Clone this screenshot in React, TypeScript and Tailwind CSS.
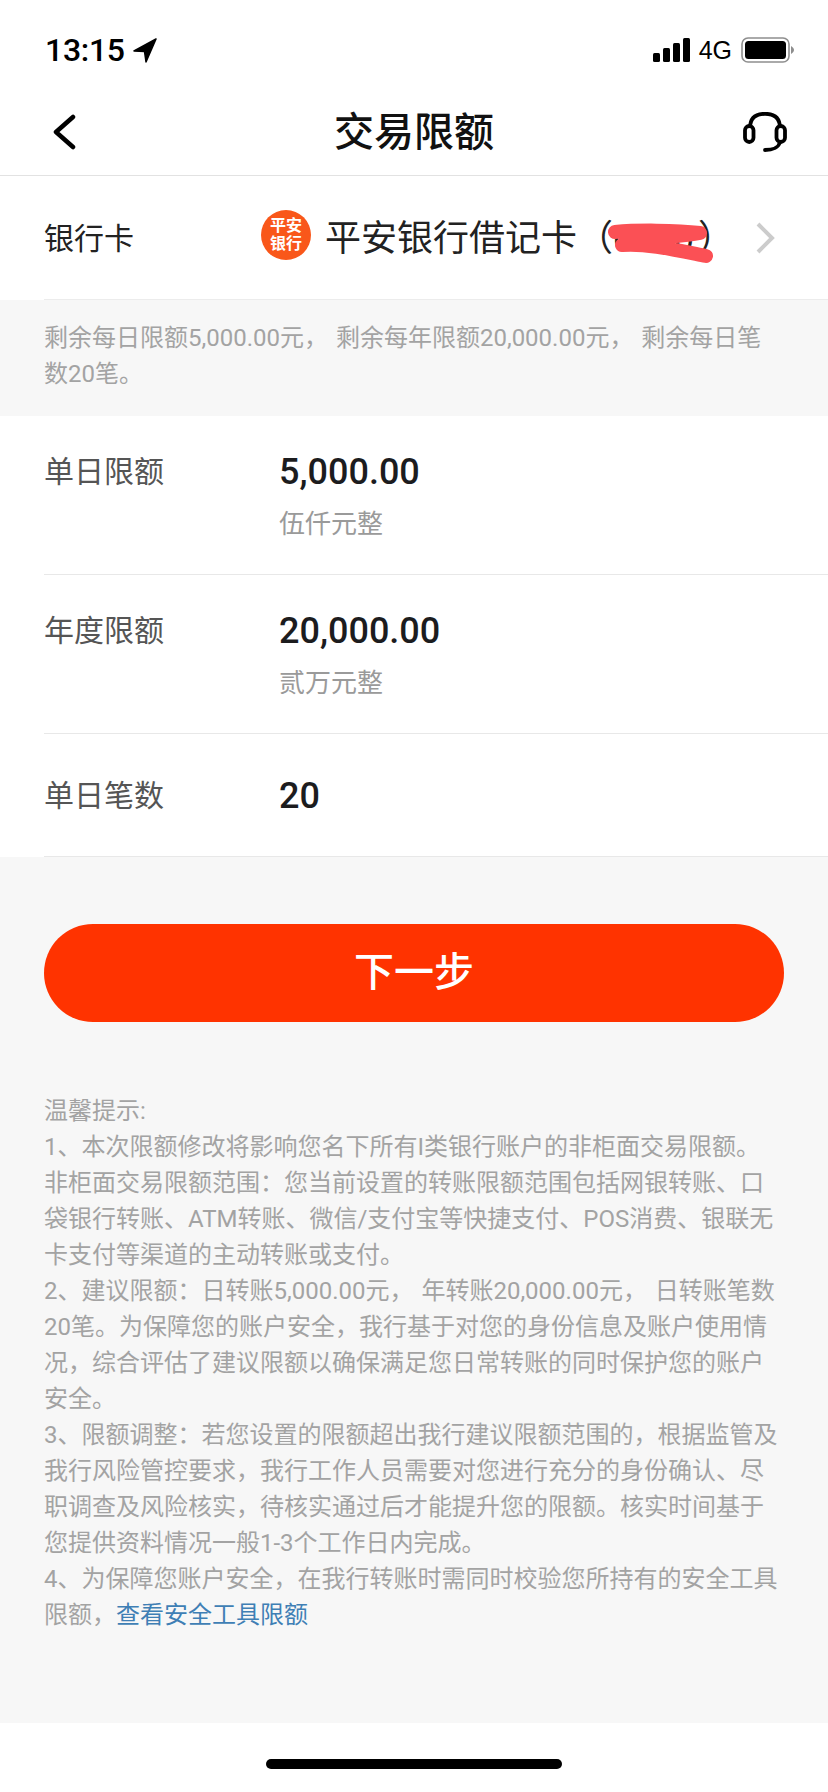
import React from 'react';

const cjk = "font-['Roboto','Noto_Sans_CJK_SC',sans-serif]";

const LimitRow: React.FC<{ label: string; value: string; note?: string }> = ({ label, value, note }) => (
  <div className="pl-[44px]">
    <div className={`flex border-b border-[#e8e8e8] ${note ? 'h-[159px] pt-[31px]' : 'h-[123px] items-center pt-[2px]'}`}>
      <div className="w-[235px] text-[30px] leading-[50px] text-[#555555]">{label}</div>
      <div>
        <div className="text-[36px] leading-[50px] font-medium text-[#1c1c1e]">{value}</div>
        {note && <div className="mt-[9px] text-[26px] leading-[36px] text-[#9a9a9a]">{note}</div>}
      </div>
    </div>
  </div>
);

export default function App() {
  return (
    <div className={`${cjk} w-[828px] h-[1792px] bg-white flex flex-col overflow-hidden`}>
      {/* status bar */}
      <div className="h-[88px] flex items-start justify-between pl-[45px] pr-[34px] pt-[30px]">
        <div className="flex items-center gap-[9px]">
          <span className="text-[32px] leading-[40px] font-medium tracking-[-0.3px] text-black font-['Roboto',sans-serif]">13:15</span>
          <svg width="24" height="25" viewBox="0 0 24 25" className="-ml-[1px]">
            <path d="M23 1 L1 13 L11.5 13.5 L13 24 Z" fill="#000" stroke="#000" strokeWidth="1.5" strokeLinejoin="round" />
          </svg>
        </div>
        <div className="flex items-center gap-[9px] h-[40px]">
          <svg width="37" height="24" viewBox="0 0 37 24">
            <rect x="0" y="15" width="7" height="9" rx="1.5" fill="#000" />
            <rect x="10" y="10" width="7" height="14" rx="1.5" fill="#000" />
            <rect x="20" y="5" width="7" height="19" rx="1.5" fill="#000" />
            <rect x="30" y="0" width="7" height="24" rx="1.5" fill="#000" />
          </svg>
          <span className="text-[25px] leading-[40px] text-black font-['Liberation_Sans',sans-serif]">4G</span>
          <svg width="53" height="26" viewBox="0 0 53 26">
            <rect x="1" y="1" width="47" height="24" rx="6" fill="none" stroke="#8e8e8e" strokeWidth="1.6" />
            <rect x="4" y="4" width="41" height="18" rx="3.5" fill="#000" />
            <path d="M50 9 C52 10 53 12 53 13 C53 14 52 16 50 17 Z" fill="#8e8e8e" />
          </svg>
        </div>
      </div>

      {/* nav */}
      <div className="h-[88px] relative flex items-center justify-between pl-[52px] pr-[41px] border-b border-[#e2e2e2]">
        <svg width="24" height="36" viewBox="0 0 24 36">
          <path d="M21 3 L4 18 L21 33" fill="none" stroke="#000" strokeWidth="4.5" strokeLinecap="round" strokeLinejoin="round" />
        </svg>
        <div className="absolute inset-x-0 top-[20px] text-center text-[40px] leading-[50px] font-medium text-[#111111]">交易限额</div>
        <svg width="44" height="40" viewBox="0 0 44 40">
          <path d="M7 16 C7 6 13 1.8 22 1.8 C31 1.8 37 6 37 16" fill="none" stroke="#000" strokeWidth="3.8" />
          <rect x="2" y="14" width="8.5" height="16" rx="4.2" fill="none" stroke="#000" strokeWidth="3.8" />
          <rect x="33.5" y="14" width="8.5" height="16" rx="4.2" fill="none" stroke="#000" strokeWidth="3.8" />
          <path d="M37 30 C36 35 30 38 22 38" fill="none" stroke="#000" strokeWidth="3.8" strokeLinecap="round" />
        </svg>
      </div>

      {/* bank card */}
      <div className="pl-[44px]">
        <div className="h-[124px] flex items-center pt-[2px] border-b border-[#ececec] relative">
          <div className="w-[217px] text-[30px] text-[#222222]">银行卡</div>
          <div className="w-[50px] h-[50px] -mt-[8px] rounded-full bg-[#f9571a] flex flex-col items-center justify-center text-white text-[16px] leading-[18px] font-bold">
            <span>平安</span>
            <span>银行</span>
          </div>
          <div className="ml-[14px] text-[36px] leading-[50px] text-[#222222] whitespace-nowrap">平安银行借记卡（<span className="inline-block w-[85px]">0000</span>）</div>
          {/* red scribble over the card number */}
          <svg width="110" height="56" viewBox="0 0 110 56" className="absolute left-[562px] top-[36px]">
            <path d="M9 20 C30 18 70 18 94 21 C70 26 35 24 16 33 C40 31 70 38 100 44" fill="none" stroke="#fb5055" strokeWidth="14" strokeLinecap="round" strokeLinejoin="round" />
          </svg>
          <svg width="22" height="34" viewBox="0 0 22 34" className="absolute left-[711px] top-[45px]">
            <path d="M3 3 L17 17 L3 31" fill="none" stroke="#cccccc" strokeWidth="4" />
          </svg>
        </div>
      </div>

      {/* remaining */}
      <div className="bg-[#f7f7f7] h-[116px] px-[44px] pt-[20px] text-[24px] leading-[36px] text-[#a3a3a3] [word-spacing:2px]">
        剩余每日限额5,000.00元， 剩余每年限额20,000.00元， 剩余每日笔<br />数20笔。
      </div>

      {/* limits */}
      <LimitRow label="单日限额" value="5,000.00" note="伍仟元整" />
      <LimitRow label="年度限额" value="20,000.00" note="贰万元整" />
      <LimitRow label="单日笔数" value="20" />

      {/* footer */}
      <div className="flex-1 bg-[#f7f7f7] px-[44px] pt-[67px]">
        <button className="w-full h-[98px] rounded-full bg-[#ff3300] text-white text-[40px] font-medium">下一步</button>
        <div className="mt-[71px] text-[24px] leading-[36px] text-[#a3a3a3] [word-spacing:2px]">
          <p>温馨提示:</p>
          <p>1、本次限额修改将影响您名下所有I类银行账户的非柜面交易限额。</p>
          <p>非柜面交易限额范围：您当前设置的转账限额范围包括网银转账、口袋银行转账、ATM转账、微信/支付宝等快捷支付、POS消费、银联无卡支付等渠道的主动转账或支付。</p>
          <p>2、建议限额：日转账5,000.00元， 年转账20,000.00元， 日转账笔数20笔。为保障您的账户安全，我行基于对您的身份信息及账户使用情况，综合评估了建议限额以确保满足您日常转账的同时保护您的账户安全。</p>
          <p>3、限额调整：若您设置的限额超出我行建议限额范围的，根据监管及我行风险管控要求，我行工作人员需要对您进行充分的身份确认、尽职调查及风险核实，待核实通过后才能提升您的限额。核实时间基于您提供资料情况一般1-3个工作日内完成。</p>
          <p>4、为保障您账户安全，在我行转账时需同时校验您所持有的安全工具限额，<span className="text-[#3f7fb5]">查看安全工具限额</span></p>
        </div>
      </div>

      {/* home indicator */}
      <div className="h-[69px] flex items-center justify-center pt-[12px]">
        <div className="w-[296px] h-[10px] rounded-full bg-black" />
      </div>
    </div>
  );
}
